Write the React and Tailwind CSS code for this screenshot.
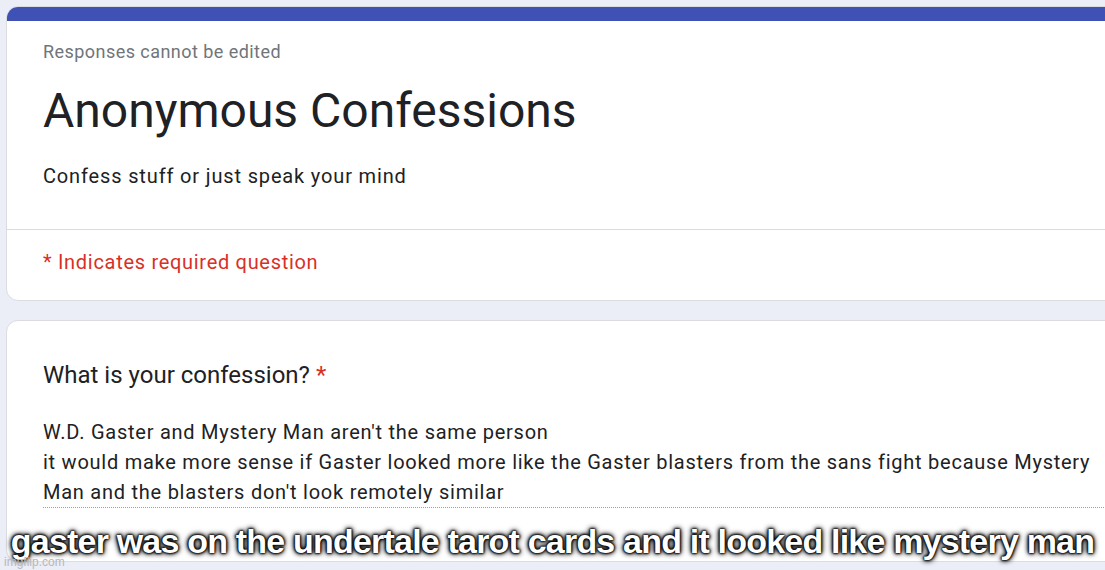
export default function App() {
  return (
    <div className="relative h-[570px] w-[1105px] overflow-hidden bg-[#ebedf7] pl-[6px] pt-[6px] font-['Roboto',sans-serif]">
      <div className="-mr-[40px] overflow-hidden rounded-[12px] border border-[#dadce0] bg-white">
        <div className="h-[14px] bg-[#3f51b5]" />
        <div className="px-[36px] pb-[39px] pt-[19px]">
          <div className="text-[18px] leading-[24px] tracking-[0.45px] text-[#70757a]">Responses cannot be edited</div>
          <h1 className="mt-[19px] text-[48px] leading-[56px] text-[#202124]">Anonymous Confessions</h1>
          <p className="mt-[23px] text-[20px] leading-[28px] tracking-[0.85px] text-[#202124]">Confess stuff or just speak your mind</p>
        </div>
        <div className="border-t border-[#dadce0] px-[36px] pb-[24px] pt-[18px]">
          <div className="text-[20px] leading-[28px] tracking-[0.7px] text-[#d93025]">* Indicates required question</div>
        </div>
      </div>
      <div className="-mr-[40px] mt-[19px] h-[242px] rounded-[12px] border border-[#dadce0] bg-white pl-[36px] pt-[39px]">
        <div className="text-[24px] leading-[30px] text-[#202124]">
          What is your confession? <span className="text-[#d93025]">*</span>
        </div>
        <div className="mr-[40px] mt-[27px] border-b border-dotted border-[#9aa0a6] text-[20px] leading-[30px] tracking-[0.75px] text-[#202124]">
          <div>W.D. Gaster and Mystery Man aren't the same person</div>
          <div>it would make more sense if Gaster looked more like the Gaster blasters from the sans fight because Mystery</div>
          <div>Man and the blasters don't look remotely similar</div>
        </div>
      </div>
      <div className="absolute left-0 right-0 top-[519px] whitespace-nowrap text-center font-['Liberation_Sans',Arial,sans-serif] text-[34px] font-bold leading-[44px] tracking-[-0.8px] text-white [text-shadow:0_0_2px_#000,0_0_2px_#000,0_0_3px_#000,0_0_5px_#000,0_0_6px_#000]">
        gaster was on the undertale tarot cards and it looked like mystery man
      </div>
      <div className="absolute left-[4px] top-[555px] font-['Liberation_Sans',Arial,sans-serif] text-[12px] leading-[14px] text-[#b8b8b8]">imgflip.com</div>
    </div>
  );
}
